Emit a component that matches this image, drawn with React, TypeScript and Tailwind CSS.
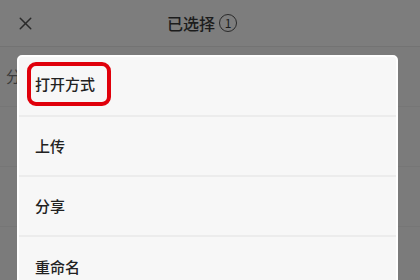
import { X } from "lucide-react";

const items = ["打开方式", "上传", "分享", "重命名"];

export default function App() {
  return (
    <div
      className="relative h-[280px] w-[420px] overflow-hidden bg-[#7b7b7b]"
      style={{ fontFamily: '"Noto Sans CJK SC", "Noto Sans", sans-serif' }}
    >
      {/* dimmed page underneath */}
      <div className="flex h-[47px] items-center border-b border-[#737373] bg-[#7d7d7d] px-[15px]">
        <X className="h-[21px] w-[21px] text-[#2a2a2a]" strokeWidth={1.7} />
        <div className="ml-[131px] flex items-center gap-[4px]">
          <span className="text-[16px] font-medium leading-none text-[#1c1c1c]">已选择</span>
          <span className="grid h-[18px] w-[18px] place-items-center rounded-full border-[1.5px] border-[#2a2a2a] text-[12px] leading-none text-[#1c1c1c]">
            1
          </span>
        </div>
      </div>
      <div className="flex h-[60px] items-center border-b border-[#767676] px-[6px]">
        <span className="text-[15px] text-[#3a3a3a]">分类</span>
      </div>
      <div className="h-[60px] border-b border-[#767676]" />
      <div className="h-[60px] border-b border-[#767676]" />

      {/* action menu */}
      <div className="absolute left-[17px] top-[55px] w-[381px] rounded-[5px] border-2 border-white bg-[#f7f7f7]">
        {items.map((label, i) => (
          <div
            key={label}
            className={`flex h-[60px] items-center px-[16px] ${i < items.length - 1 ? "border-b-2 border-[#ececec]" : ""}`}
          >
            {i === 0 ? (
              <span className="-ml-[8px] -mt-[4px] flex h-[44px] items-center rounded-[9px] border-[4px] border-[#e0000b] pl-[4px] pr-[12px] text-[15px] font-medium text-[#222222]">
                {label}
              </span>
            ) : (
              <span className="text-[15px] font-medium text-[#222222]">{label}</span>
            )}
          </div>
        ))}
      </div>
    </div>
  );
}
